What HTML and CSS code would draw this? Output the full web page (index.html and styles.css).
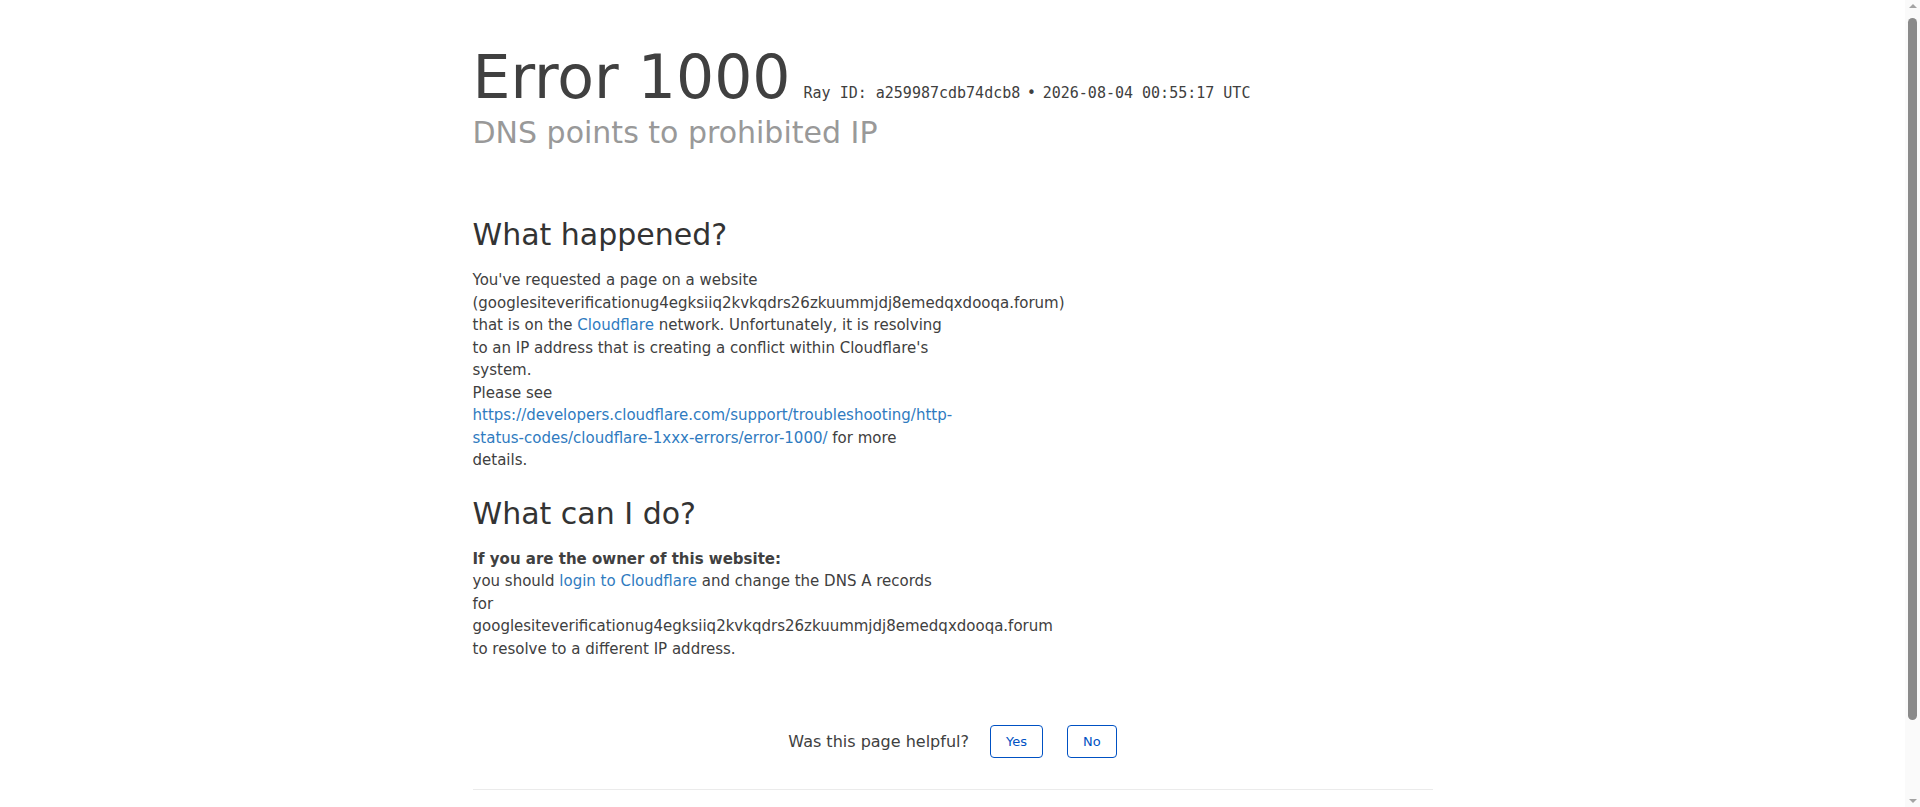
FILE: index.html
```html
<!DOCTYPE html>
<html lang="en">
<head>
<meta charset="utf-8">
<title>DNS points to prohibited IP | Cloudflare</title>
<link rel="stylesheet" href="styles.css">
</head>
<body>
<div class="wrapper">
  <header class="overview">
    <h1 class="title"><span>Error</span> <span>1000</span><small class="ray"><span class="mono">Ray ID: a259987cdb74dcb8</span> <span class="bull">&bull;</span> <span class="mono">2026-08-04 00:55:17 UTC</span></small></h1>
    <h2 class="subheadline">DNS points to prohibited IP</h2>
  </header>

  <div class="content">
    <section class="section">
      <h2 class="section-title">What happened?</h2>
      <p>You've requested a page on a website (googlesiteverificationug4egksiiq2kvkqdrs26zkuummjdj8emedqxdooqa.forum) that is on the <a href="#">Cloudflare</a> network. Unfortunately, it is resolving to an IP address that is creating a conflict within Cloudflare's system.<br>Please see <a href="#">https://developers.cloudflare.com/support/troubleshooting/http-status-codes/cloudflare-1xxx-errors/error-1000/</a> for more details.</p>
    </section>
    <section class="section">
      <h2 class="section-title">What can I do?</h2>
      <p><strong>If you are the owner of this website:</strong><br>you should <a href="#">login to Cloudflare</a> and change the DNS A records for googlesiteverificationug4egksiiq2kvkqdrs26zkuummjdj8emedqxdooqa.forum to resolve to a different IP address.</p>
    </section>
  </div>

  <div class="feedback">
    <span class="feedback-q">Was this page helpful?</span>
    <button class="fb-btn fb-yes" type="button">Yes</button>
    <button class="fb-btn fb-no" type="button">No</button>
  </div>

  <footer class="footer">
    <span>Cloudflare Ray ID: <strong>a259987cdb74dcb8</strong></span>
    <span class="sep">&bull;</span>
    <span>Your IP: <button class="reveal" type="button">Click to reveal</button></span>
    <span class="sep">&bull;</span>
    <span>Performance &amp; security by <a href="#">Cloudflare</a></span>
  </footer>
</div>

<div class="scrollbar" aria-hidden="true">
  <span class="sb-arrow sb-up"></span>
  <span class="sb-thumb"></span>
  <span class="sb-arrow sb-down"></span>
</div>
</body>
</html>
```

FILE: styles.css
```css
html, body {
  margin: 0;
  padding: 0;
}

body {
  font-family: "DejaVu Sans", sans-serif;
  font-size: 15px;
  line-height: 1.5;
  color: #404040;
  background: #ffffff;
  padding-right: 15px;
  padding-bottom: 52px;
}

.wrapper {
  max-width: 960px;
  margin: 0 auto;
  padding-top: 41px;
}

.title {
  margin: 0;
  font-size: 60px;
  font-weight: 400;
  line-height: 72px;
  color: #404040;
}

.ray {
  margin-left: 13px;
  font-family: "DejaVu Sans", sans-serif;
  font-size: 15px;
  line-height: normal;
  white-space: nowrap;
  color: #404040;
}

.ray .mono {
  font-family: "DejaVu Sans Mono", monospace;
}

.ray .bull {
  margin: 0 2px 0 2px;
}

.subheadline {
  margin: 0;
  font-size: 30px;
  font-weight: 400;
  line-height: 39px;
  color: #999999;
}

.content {
  margin-top: 63px;
  max-width: 481px;
}

.section + .section {
  margin-top: 22px;
}

.section-title {
  margin: 0 0 15px;
  font-size: 30px;
  font-weight: 400;
  line-height: 39px;
  color: #333333;
}

p {
  margin: 0;
}

strong {
  font-weight: 700;
}

a {
  color: #2f7bbf;
  text-decoration: none;
}

.feedback {
  display: flex;
  justify-content: center;
  align-items: center;
  margin-top: 65px;
  margin-bottom: 31px;
}

.feedback-q {
  font-size: 16px;
  line-height: 24px;
  color: #404040;
}

.fb-btn {
  font-family: "DejaVu Sans", sans-serif;
  font-size: 13px;
  line-height: 17px;
  padding: 7px 15px;
  border: 1px solid #0051c3;
  border-radius: 4px;
  background: transparent;
  color: #0051c3;
  cursor: pointer;
}

.fb-yes {
  margin-left: 21px;
}

.fb-no {
  margin-left: 24px;
}

.footer {
  border-top: 1px solid #ebebeb;
  padding: 16px 0;
  font-size: 13px;
  line-height: 19.5px;
  text-align: center;
  color: #404040;
}

.footer .sep {
  margin: 0 6px;
}

.reveal {
  font-family: "DejaVu Sans", sans-serif;
  font-size: 13px;
  background: transparent;
  border: 0;
  padding: 0;
  color: #2f7bbf;
  cursor: pointer;
}

/* browser scrollbar, drawn over the right edge */
.scrollbar {
  position: fixed;
  top: 0;
  right: 0;
  width: 15px;
  height: 100vh;
  background: #fafafa;
}

.sb-thumb {
  position: absolute;
  top: 18px;
  left: 3px;
  width: 9px;
  height: 702px;
  border-radius: 5px;
  background: #8a8a8a;
}

.sb-arrow {
  position: absolute;
  left: 4px;
  width: 0;
  height: 0;
  border-left: 4px solid transparent;
  border-right: 4px solid transparent;
}

.sb-up {
  top: 4px;
  border-bottom: 4px solid #a3a3a3;
}

.sb-down {
  bottom: 4px;
  border-top: 4px solid #a3a3a3;
}
```
